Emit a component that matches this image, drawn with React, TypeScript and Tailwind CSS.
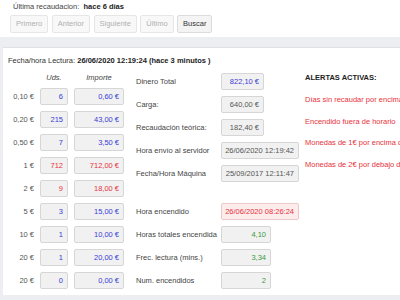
const coins = [
  { label: "0,10 €", uds: "6", importe: "0,60 €", red: false },
  { label: "0,20 €", uds: "215", importe: "43,00 €", red: false },
  { label: "0,50 €", uds: "7", importe: "3,50 €", red: false },
  { label: "1 €", uds: "712", importe: "712,00 €", red: true },
  { label: "2 €", uds: "9", importe: "18,00 €", red: true },
  { label: "5 €", uds: "3", importe: "15,00 €", red: false },
  { label: "10 €", uds: "1", importe: "10,00 €", red: false },
  { label: "20 €", uds: "1", importe: "20,00 €", red: false },
  { label: "20 €", uds: "0", importe: "0,00 €", red: false },
];

const alerts = [
  "Días sin recaudar por encima del límite",
  "Encendido fuera de horario",
  "Monedas de 1€ por encima del límite",
  "Monedas de 2€ por debajo del límite",
];

function Box({ children, className }: { children: React.ReactNode; className: string }) {
  return (
    <div className={"h-[17px] flex items-center justify-end pr-[4px] rounded-[2px] border " + className}>
      {children}
    </div>
  );
}

function InfoRow({ label, children }: { label: string; children: React.ReactNode }) {
  return (
    <div className="flex items-center h-[17px]">
      <span className="w-[85px] text-[#444]">{label}</span>
      {children}
    </div>
  );
}

export default function App() {
  const nav = ["Primero", "Anterior", "Siguiente", "Último"];
  const plain = "bg-[#f1f1f1] border-[#d6d6d6]";

  return (
    <div className="w-[400px] h-[300px] overflow-hidden bg-[#eceef1] font-['Liberation_Sans',Arial,sans-serif] text-[7.5px] leading-none">
      {/* top card */}
      <div className="bg-white h-[37px] pl-[13px] pt-[3px]">
        <p className="text-[#444]">
          Última recaudacion:&nbsp; <b className="text-[#222]">hace 6 días</b>
        </p>
        <div className="flex gap-[3.5px] ml-[-3px] mt-[4px]">
          {nav.map((n) => (
            <button
              key={n}
              className="h-[18px] px-[5px] rounded-[2px] border border-[#e6e6e6] bg-[#f8f8f8] text-[#b0b0b0]"
            >
              {n}
            </button>
          ))}
          <button className="h-[18px] px-[5px] rounded-[2px] border border-[#dcdcdc] bg-[#f4f4f4] text-[#333]">
            Buscar
          </button>
        </div>
      </div>

      {/* reading card */}
      <div className="mt-[10px] ml-[3px] bg-white h-[248px] border-t border-[#dfe1e4]">
        <p className="pl-[5px] pt-[9px] h-[23px] text-[#333]">
          Fecha/hora Lectura: <b className="text-[#222]">26/06/2020 12:19:24 (hace 3 minutos )</b>
        </p>

        <div className="flex">
          {/* coins */}
          <div className="flex flex-col">
            <div className="flex h-[14px] items-center italic text-[#444]">
              <span className="w-[31px]" />
              <span className="ml-[6px] w-[28px] text-center">Uds.</span>
              <span className="ml-[6px] w-[50px] text-center">Importe</span>
            </div>
            <div className="flex flex-col gap-[6px] mt-[3px]">
              {coins.map((c, i) => (
                <div key={i} className="flex items-center">
                  <span className="w-[31px] text-right text-[#555]">{c.label}</span>
                  <Box className={"ml-[6px] w-[28px] " + plain + (c.red ? " text-[#e8323c]" : " text-[#3b3bd9]")}>
                    {c.uds}
                  </Box>
                  <Box className={"ml-[6px] w-[50px] " + plain + (c.red ? " text-[#e8323c]" : " text-[#3b3bd9]")}>
                    {c.importe}
                  </Box>
                </div>
              ))}
            </div>
          </div>

          {/* totals */}
          <div className="ml-[12px] mt-[2px] flex flex-col gap-[6px]">
            <InfoRow label="Dinero Total">
              <Box className={"w-[43px] text-[#3b3bd9] " + plain}>822,10 €</Box>
            </InfoRow>
            <InfoRow label="Carga:">
              <Box className={"w-[43px] text-[#555] " + plain}>640,00 €</Box>
            </InfoRow>
            <InfoRow label="Recaudación teórica:">
              <Box className={"w-[43px] text-[#555] " + plain}>182,40 €</Box>
            </InfoRow>
            <InfoRow label="Hora envío al servidor">
              <Box className={"w-[78px] text-[#555] " + plain}>26/06/2020 12:19:42</Box>
            </InfoRow>
            <InfoRow label="Fecha/Hora Máquina">
              <Box className={"w-[78px] text-[#555] " + plain}>25/09/2017 12:11:47</Box>
            </InfoRow>
            <div className="mt-[15px]">
              <InfoRow label="Hora encendido">
                <Box className="w-[78px] text-[#e8323c] bg-[#fcecec] border-[#ecc9c9]">26/06/2020 08:26:24</Box>
              </InfoRow>
            </div>
            <InfoRow label="Horas totales encendida">
              <Box className={"w-[50px] text-[#3a9a3a] " + plain}>4,10</Box>
            </InfoRow>
            <InfoRow label="Frec. lectura (mins.)">
              <Box className={"w-[50px] text-[#3a9a3a] " + plain}>3,34</Box>
            </InfoRow>
            <InfoRow label="Num. encendidos">
              <Box className={"w-[50px] text-[#3a9a3a] " + plain}>2</Box>
            </InfoRow>
          </div>

          {/* alerts */}
          <div className="ml-[6px] flex flex-col whitespace-nowrap">
            <div className="h-[14px] flex items-center font-bold text-[#222]">ALERTAS ACTIVAS:</div>
            <div className="mt-[4px] flex flex-col">
              {alerts.map((a) => (
                <div key={a} className="h-[21.5px] flex items-center text-[#e8323c]">
                  {a}
                </div>
              ))}
            </div>
          </div>
        </div>
      </div>
    </div>
  );
}
